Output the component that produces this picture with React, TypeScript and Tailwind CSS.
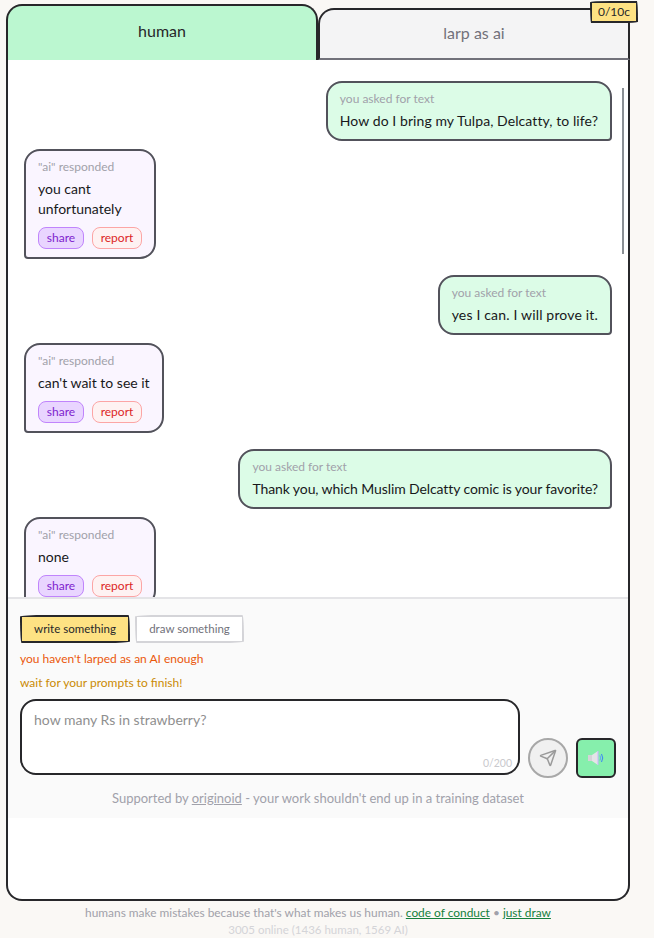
import React from 'react';
import { Send } from 'lucide-react';

const font = "font-['Lato','Noto_Sans',sans-serif]";

const UserBubble = ({ text, fit }: { text: string; fit: string }) => (
  <div className="self-end bg-[#dcfce7] border-2 border-[#52525b] rounded-t-2xl rounded-bl-2xl rounded-br-[4px] px-3 py-2">
    <div className="text-xs leading-4 text-[#a1a1aa] mb-1">you asked for text</div>
    <div className={`text-sm leading-5 text-[#18181b] whitespace-nowrap ${fit}`}>{text}</div>
  </div>
);

const AiBubble = ({ lines }: { lines: string[] }) => (
  <div className="self-start bg-[#faf5ff] border-2 border-[#52525b] rounded-t-2xl rounded-br-2xl rounded-bl-[4px] px-3 py-2">
    <div className="text-xs leading-4 text-[#a1a1aa] mb-1">"ai" responded</div>
    {lines.map((line) => (
      <div key={line} className="text-sm leading-5 text-[#18181b] whitespace-nowrap">{line}</div>
    ))}
    <div className="flex gap-2 mt-2">
      <span className="w-[46px] h-[22px] flex items-center justify-center rounded-lg border border-[#c084fc] bg-[#e9d5ff] text-xs text-[#7e22ce]">share</span>
      <span className="w-[50px] h-[22px] flex items-center justify-center rounded-lg border border-[#fca5a5] bg-[#fef2f2] text-xs text-[#dc2626]">report</span>
    </div>
  </div>
);

const Speaker = () => (
  <svg width="18" height="18" viewBox="0 0 18 18">
    <rect x="1" y="6" width="4" height="6" fill="#d4d4d8" />
    <path d="M5 6 L11 2 V16 L5 12 Z" fill="#e4e4e7" />
    <path d="M11 2 V16" stroke="#c4b5fd" strokeWidth="1" />
    <path d="M13 6.5 Q14.5 9 13 11.5" stroke="#60a5fa" strokeWidth="1" fill="none" />
    <path d="M14.5 5 Q17 9 14.5 13" stroke="#3b82f6" strokeWidth="1" fill="none" />
  </svg>
);

export default function App() {
  return (
    <div className={`w-[654px] h-[938px] overflow-hidden bg-[#faf8f5] ${font}`}>
      <div className="relative ml-[6px] pt-1 w-[624px]">
        <div className="absolute right-[-8px] top-[1px] z-10 w-[48px] h-[22px] flex items-center justify-center bg-[#fee283] border-2 border-[#27272a] rounded-[255px_15px_225px_15px/15px_225px_15px_255px] text-xs text-[#27272a]">
          0/10c
        </div>
        {/* Tabs */}
        <div className="flex items-end h-[56px]">
          <div className="w-[312px] h-[56px] flex items-center justify-center pb-1 bg-[#bbf7d0] border-2 border-b-0 border-[#27272a] rounded-t-2xl text-base text-[#27272a]">
            human
          </div>
          <div className="flex-1 h-[52px] flex items-center justify-center pb-[3px] bg-[#f4f4f5] border-2 border-b-[#71717a] border-[#27272a] rounded-tl-2xl text-base text-[#71717a]">
            larp as ai
          </div>
        </div>
        <div className="h-[841px] bg-white border-2 border-t-0 border-[#27272a] rounded-b-2xl overflow-hidden">
          {/* Messages */}
          <div className="relative h-[537px] overflow-hidden flex flex-col pt-[21px] px-4">
            <div className="absolute right-[4px] top-[28px] w-[2px] h-[166px] bg-[#8a8f94]" />
            <UserBubble text="How do I bring my Tulpa, Delcatty, to life?" fit="tracking-[0.08px]" />
            <div className="mt-2 self-start"><AiBubble lines={['you cant', 'unfortunately']} /></div>
            <div className="mt-4 self-end"><UserBubble text="yes I can. I will prove it." fit="tracking-[0.17px]" /></div>
            <div className="mt-2 self-start"><AiBubble lines={["can't wait to see it"]} /></div>
            <div className="mt-4 self-end"><UserBubble text="Thank you, which Muslim Delcatty comic is your favorite?" fit="tracking-[-0.1px]" /></div>
            <div className="mt-2 self-start"><AiBubble lines={['none']} /></div>
          </div>
          {/* Input */}
          <div className="h-[221px] bg-[#fafafa] border-t-2 border-[#e4e4e7] pt-[16px] px-3">
            <div className="flex gap-[5px]">
              <span className="w-[110px] h-[28px] flex items-center justify-center bg-[#fee283] border-2 border-[#27272a] rounded-[255px_15px_225px_15px/15px_225px_15px_255px] text-[11.5px] text-[#27272a]">write something</span>
              <span className="w-[109px] h-[28px] flex items-center justify-center bg-white border-2 border-[#d4d4d8] rounded-[255px_15px_225px_15px/15px_225px_15px_255px] text-[11.5px] text-[#71717a]">draw something</span>
            </div>
            <div className="mt-2 text-xs leading-4 text-[#ea580c]">you haven't larped as an AI enough</div>
            <div className="mt-2 text-xs leading-4 text-[#ca8a04]">wait for your prompts to finish!</div>
            <div className="flex items-end gap-2 mt-2">
              <div className="relative w-[500px] h-[76px] bg-white border-2 border-[#27272a] rounded-2xl px-3 py-[9px] text-sm leading-5 text-[#8f8f8f]">
                how many Rs in strawberry?
                <span className="absolute right-[6px] bottom-0 text-[10.5px] text-[#c9c9cd]">0/200</span>
              </div>
              <div className="mb-[-3px] w-[40px] h-[40px] flex items-center justify-center rounded-full border-2 border-[#a8a8a8] bg-[#f0f0f0] text-[#9a9a9a]">
                <Send size={18} strokeWidth={2} />
              </div>
              <div className="mb-[-3px] w-[40px] h-[40px] flex items-center justify-center rounded-md border-2 border-[#27272a] bg-[#86efac]">
                <Speaker />
              </div>
            </div>
            <div className="mt-[15px] text-center text-[13px] leading-4 text-[#a1a1aa]">
              Supported by <span className="underline">originoid</span> - your work shouldn't end up in a training dataset
            </div>
          </div>
        </div>
      </div>
      <div className="pr-[18px] text-center text-[11.9px] leading-4 text-[#a1a1aa] mt-[4px]">
        humans make mistakes because that's what makes us human. <span className="text-[#15803d] underline">code of conduct</span> • <span className="text-[#15803d] underline">just draw</span>
      </div>
      <div className="pr-[18px] text-center text-[11.5px] leading-4 text-[#d4d4d8] mt-px">3005 online (1436 human, 1569 AI)</div>
    </div>
  );
}
